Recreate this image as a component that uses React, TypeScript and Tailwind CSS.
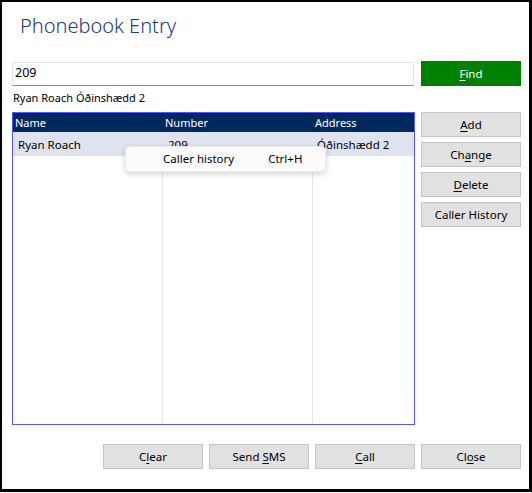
import React from 'react';

const font = { fontFamily: '"Noto Sans", "Open Sans", sans-serif' };

type BtnProps = { label: string; hot?: number; className?: string };

// Renders a label with one access-key letter underlined
function AccessLabel({ label, hot }: { label: string; hot?: number }) {
  if (hot === undefined) return <span className="whitespace-pre">{label}</span>;
  return (
    <span className="whitespace-pre">
      {label.slice(0, hot)}
      <span className="underline underline-offset-2">{label[hot]}</span>
      {label.slice(hot + 1)}
    </span>
  );
}

function GrayButton({ label, hot, className = '' }: BtnProps) {
  return (
    <button
      type="button"
      className={`h-[25px] w-[100px] border border-[#c4c4c4] bg-[#e1e1e1] text-[11.5px] text-black flex items-center justify-center ${className}`}
    >
      <AccessLabel label={label} hot={hot} />
    </button>
  );
}

const rows = [{ name: 'Ryan Roach', number: '209', address: 'Óðinshædd 2' }];

export default function App() {
  return (
    <div
      style={font}
      className="w-[532px] h-[492px] bg-white border-l-2 border-t-2 border-r-[3px] border-b-[3px] border-black flex flex-col pl-[10px] pr-[8px]"
    >
      <h1 className="mt-[10px] ml-[8px] text-[20px] leading-[28px] font-light text-[#1a3a82]">Phonebook Entry</h1>

      {/* search row */}
      <div className="mt-[21px] flex items-center gap-[7px]">
        <div className="flex-1 h-[24px] border border-[#e3e3e3] border-b-[#8a8a8a] flex items-center px-[2px] text-[12.5px]">
          209
        </div>
        <button
          type="button"
          className="w-[100px] h-[25px] bg-[#008000] text-white text-[11.5px] flex items-center justify-center"
        >
          <AccessLabel label="Find" hot={0} />
        </button>
      </div>

      <div className="mt-[4px] ml-[1px] text-[11px] leading-[16px] text-black">Ryan Roach Óðinshædd 2</div>

      {/* list + side buttons */}
      <div className="mt-[6px] flex gap-[6px]">
        <div className="relative w-[403px] h-[313px] border border-[#5555ff] flex flex-col text-[11px]">
          <div className="grid grid-cols-[150px_150px_1fr] h-[19px] bg-[#002a5e] text-white leading-[19px]">
            <div className="pl-[2px]">Name</div>
            <div className="pl-[2px]">Number</div>
            <div className="pl-[2px]">Address</div>
          </div>
          <div className="flex-1 grid grid-cols-[150px_150px_1fr] relative">
            <div className="border-r border-[#e8e8e8]" />
            <div className="border-r border-[#e8e8e8]" />
            <div />
            <div className="absolute inset-x-0 top-0">
              {rows.map((r) => (
                <div
                  key={r.number}
                  className="grid grid-cols-[150px_150px_1fr] h-[24px] bg-[#dfe3ef] items-center pt-[2px] text-[11.5px]"
                >
                  <div className="pl-[5px]">{r.name}</div>
                  <div className="pl-[5px]">{r.number}</div>
                  <div className="pl-[4px]">{r.address}</div>
                </div>
              ))}
            </div>
          </div>

          {/* context menu */}
          <div className="absolute left-[112px] top-[33px] w-[201px] h-[26px] bg-[#fbfbfb] rounded-[5px] border border-[#ececec] shadow-[0_2px_6px_rgba(0,0,0,0.18)] flex items-center text-[11.5px]">
            <span className="ml-[37px]">Caller history</span>
            <span className="ml-[34px]">Ctrl+H</span>
          </div>
        </div>

        <div className="flex flex-col gap-[5px]">
          <GrayButton label="Add" hot={0} />
          <GrayButton label="Change" hot={2} />
          <GrayButton label="Delete" hot={0} />
          <GrayButton label="Caller History" />
        </div>
      </div>

      {/* bottom actions */}
      <div className="mt-[19px] flex justify-end gap-[6px]">
        <GrayButton label="Clear" hot={1} />
        <GrayButton label="Send SMS" hot={5} />
        <GrayButton label="Call" hot={0} />
        <GrayButton label="Close" hot={2} />
      </div>
    </div>
  );
}
